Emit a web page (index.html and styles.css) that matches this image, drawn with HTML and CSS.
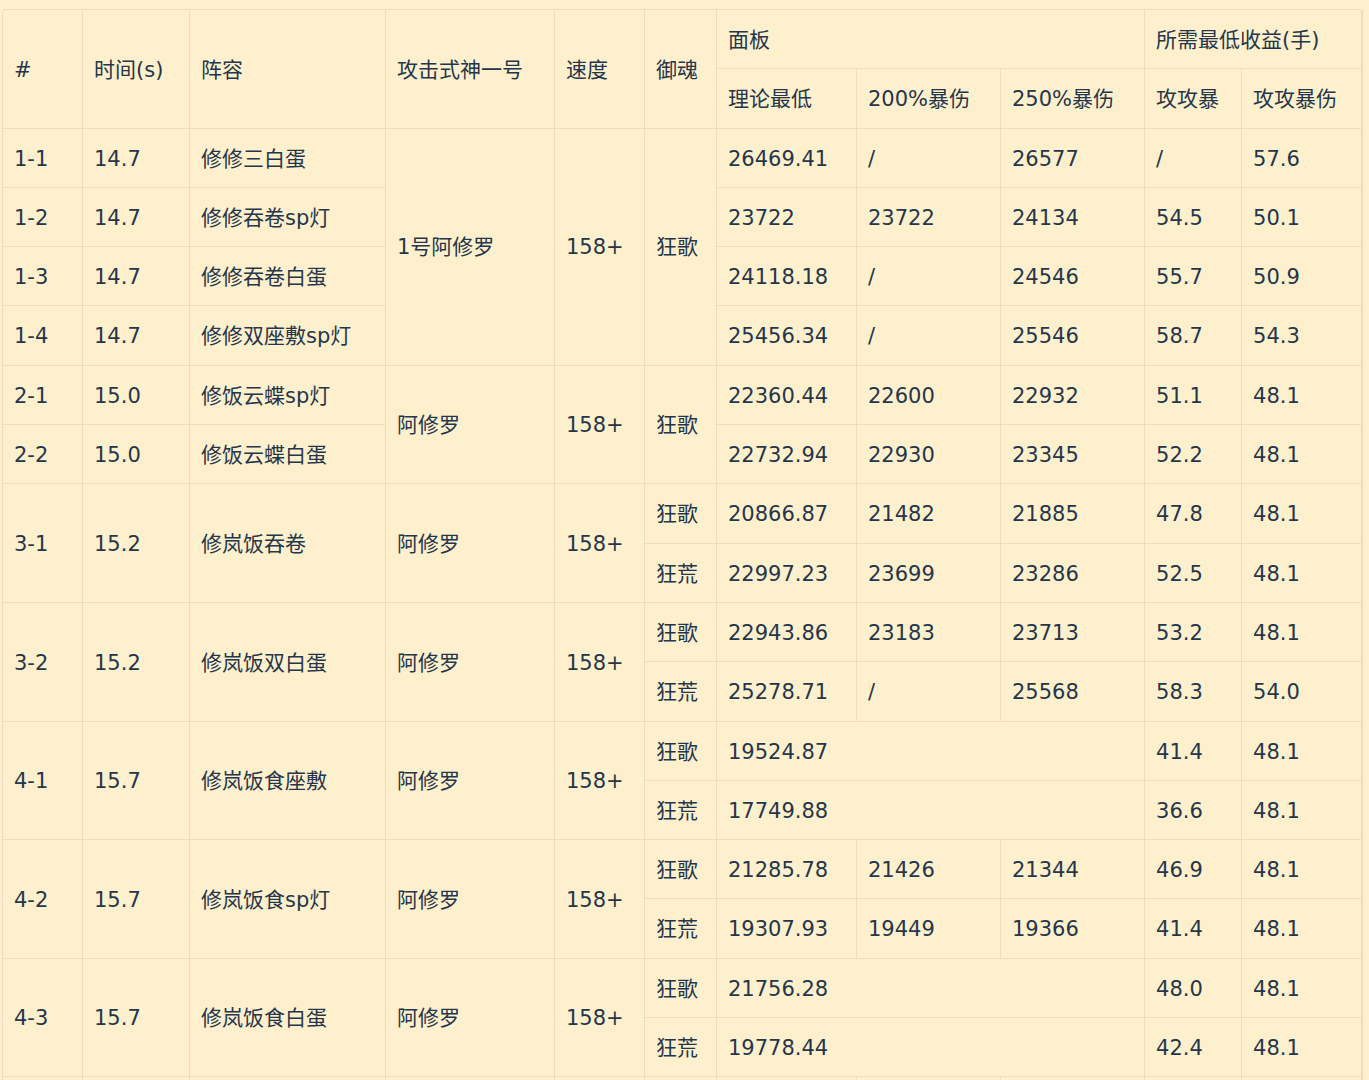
FILE: index.html
```html
<!DOCTYPE html>
<html lang="zh-CN">
<head>
<meta charset="utf-8">
<title>阵容数据</title>
<link rel="stylesheet" href="styles.css">
</head>
<body>
<div class="wrap">
<table class="data">
  <colgroup>
    <col class="c1"><col class="c2"><col class="c3"><col class="c4"><col class="c5"><col class="c6">
    <col class="c7"><col class="c8"><col class="c9"><col class="c10"><col class="c11">
  </colgroup>
  <thead>
    <tr>
      <th rowspan="2">#</th>
      <th rowspan="2">时间(s)</th>
      <th rowspan="2">阵容</th>
      <th rowspan="2">攻击式神一号</th>
      <th rowspan="2">速度</th>
      <th rowspan="2">御魂</th>
      <th colspan="3">面板</th>
      <th colspan="2" class="last">所需最低收益(手)</th>
    </tr>
    <tr>
      <th>理论最低</th>
      <th>200%暴伤</th>
      <th>250%暴伤</th>
      <th>攻攻暴</th>
      <th class="last">攻攻暴伤</th>
    </tr>
  </thead>
  <tbody>
    <tr><td>1-1</td><td>14.7</td><td>修修三白蛋</td><td rowspan="4">1号阿修罗</td><td rowspan="4">158+</td><td rowspan="4">狂歌</td><td>26469.41</td><td>/</td><td>26577</td><td>/</td><td class="last">57.6</td></tr>
    <tr><td>1-2</td><td>14.7</td><td>修修吞卷sp灯</td><td>23722</td><td>23722</td><td>24134</td><td>54.5</td><td class="last">50.1</td></tr>
    <tr><td>1-3</td><td>14.7</td><td>修修吞卷白蛋</td><td>24118.18</td><td>/</td><td>24546</td><td>55.7</td><td class="last">50.9</td></tr>
    <tr><td>1-4</td><td>14.7</td><td>修修双座敷sp灯</td><td>25456.34</td><td>/</td><td>25546</td><td>58.7</td><td class="last">54.3</td></tr>
    <tr><td>2-1</td><td>15.0</td><td>修饭云蝶sp灯</td><td rowspan="2">阿修罗</td><td rowspan="2">158+</td><td rowspan="2">狂歌</td><td>22360.44</td><td>22600</td><td>22932</td><td>51.1</td><td class="last">48.1</td></tr>
    <tr><td>2-2</td><td>15.0</td><td>修饭云蝶白蛋</td><td>22732.94</td><td>22930</td><td>23345</td><td>52.2</td><td class="last">48.1</td></tr>
    <tr><td rowspan="2">3-1</td><td rowspan="2">15.2</td><td rowspan="2">修岚饭吞卷</td><td rowspan="2">阿修罗</td><td rowspan="2">158+</td><td>狂歌</td><td>20866.87</td><td>21482</td><td>21885</td><td>47.8</td><td class="last">48.1</td></tr>
    <tr><td>狂荒</td><td>22997.23</td><td>23699</td><td>23286</td><td>52.5</td><td class="last">48.1</td></tr>
    <tr><td rowspan="2">3-2</td><td rowspan="2">15.2</td><td rowspan="2">修岚饭双白蛋</td><td rowspan="2">阿修罗</td><td rowspan="2">158+</td><td>狂歌</td><td>22943.86</td><td>23183</td><td>23713</td><td>53.2</td><td class="last">48.1</td></tr>
    <tr><td>狂荒</td><td>25278.71</td><td>/</td><td>25568</td><td>58.3</td><td class="last">54.0</td></tr>
    <tr><td rowspan="2">4-1</td><td rowspan="2">15.7</td><td rowspan="2">修岚饭食座敷</td><td rowspan="2">阿修罗</td><td rowspan="2">158+</td><td>狂歌</td><td colspan="3">19524.87</td><td>41.4</td><td class="last">48.1</td></tr>
    <tr><td>狂荒</td><td colspan="3">17749.88</td><td>36.6</td><td class="last">48.1</td></tr>
    <tr><td rowspan="2">4-2</td><td rowspan="2">15.7</td><td rowspan="2">修岚饭食sp灯</td><td rowspan="2">阿修罗</td><td rowspan="2">158+</td><td>狂歌</td><td>21285.78</td><td>21426</td><td>21344</td><td>46.9</td><td class="last">48.1</td></tr>
    <tr><td>狂荒</td><td>19307.93</td><td>19449</td><td>19366</td><td>41.4</td><td class="last">48.1</td></tr>
    <tr><td rowspan="2">4-3</td><td rowspan="2">15.7</td><td rowspan="2">修岚饭食白蛋</td><td rowspan="2">阿修罗</td><td rowspan="2">158+</td><td>狂歌</td><td colspan="3">21756.28</td><td>48.0</td><td class="last">48.1</td></tr>
    <tr><td>狂荒</td><td colspan="3">19778.44</td><td>42.4</td><td class="last">48.1</td></tr>
    <tr class="more"><td></td><td></td><td></td><td></td><td></td><td></td><td></td><td></td><td></td><td></td><td class="last"></td></tr>
  </tbody>
</table>
</div>
</body>
</html>
```

FILE: styles.css
```css
html, body {
  margin: 0;
  padding: 0;
  background: #fff0cd;
}

.wrap {
  padding: 9px 0 0 2px;
}

.data {
  width: 1360px;
  table-layout: fixed;
  border-collapse: separate;
  border-spacing: 0;
  border-top: 1px solid #efdbc1;
  border-left: 1px solid #efdbc1;
  border-radius: 4px;
  background: #fff0cd;
  font-family: "DejaVu Sans", "Noto Sans CJK SC", sans-serif;
  font-size: 21px;
  color: #24364b;
}

.c1 { width: 80px; }
.c2 { width: 107px; }
.c3 { width: 196px; }
.c4 { width: 169px; }
.c5 { width: 90px; }
.c6 { width: 72px; }
.c7 { width: 140px; }
.c8 { width: 144px; }
.c9 { width: 144px; }
.c10 { width: 97px; }
.c11 { width: 121px; }

.data th,
.data td {
  box-sizing: border-box;
  height: 59.3px;
  padding: 3px 10px 0 11px;
  border-right: 1px solid #efdbc1;
  border-bottom: 1px solid #efdbc1;
  text-align: left;
  vertical-align: middle;
  font-weight: normal;
  line-height: 1.4;
  white-space: nowrap;
}

.data th.last,
.data td.last {
  border-right-width: 2px;
}
```
